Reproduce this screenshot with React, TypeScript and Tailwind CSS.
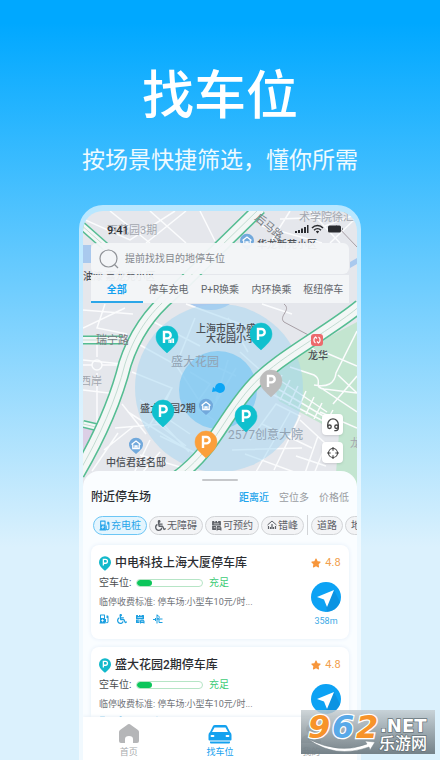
import type { ReactNode } from 'react'
import { FaStar, FaWheelchair } from 'react-icons/fa'
import clsx from 'clsx'

interface Lot {
  name: string
  rating: string
  free: number
  state: string
  fee: string
  distance: string
}

const tabs = ['全部', '停车充电', 'P+R换乘', '内环换乘', '枢纽停车']

const sorts = ['距离近', '空位多', '价格低']

const lots: Lot[] = [
  { name: '中电科技上海大厦停车库', rating: '4.8', free: 23, state: '充足', fee: '停车场:小型车10元/时...', distance: '358m' },
  { name: '盛大花园2期停车库', rating: '4.8', free: 23, state: '充足', fee: '停车场:小型车10元/时...', distance: '358m' },
]

const teal = '#0fc0ce'

const pins = [
  { x: 167, y: 337, color: teal, small: true },
  { x: 261, y: 334, color: teal },
  { x: 271, y: 381, color: '#bcbcbc' },
  { x: 163, y: 411, color: teal },
  { x: 246, y: 416, color: teal },
  { x: 206, y: 442, color: '#fb9f3b' },
]

function ChargeIcon({ className }: { className?: string }) {
  return (
    <svg viewBox="0 0 20 20" className={className} fill="currentColor" aria-hidden="true">
      <path fillRule="evenodd" d="M3 1h8a1 1 0 0 1 1 1v15h1v2H1v-2h1V2a1 1 0 0 1 1-1zm1 2v5h6V3zm4 6-4 5h2.500L6 17l4-5H7.500z" />
      <path d="M12 10h2v6q1.500 1.500 3 0V8h-2V3h3l1 2v11q-2 4-6 1.500l-1-1.500z" />
    </svg>
  )
}

function ReserveIcon({ className }: { className?: string }) {
  return (
    <svg viewBox="0 0 20 20" className={className} fill="currentColor" aria-hidden="true">
      <path d="M3 2h3v2h2V2h3v2h2V2h4a1 1 0 0 1 1 1v7H2V3a1 1 0 0 1 1-1z" />
      <path d="M2 11h7v7H3a1 1 0 0 1-1-1z" />
      <path d="M11 11h6l2 3v5h-2v-1h-5v1h-2v-5z" />
      <path d="M5 7h10M5 14h3M12 14.500h5" stroke="white" strokeWidth="1.200" />
    </svg>
  )
}

function PeakIcon({ className }: { className?: string }) {
  return (
    <svg viewBox="0 0 20 20" className={className} fill="none" stroke="currentColor" strokeWidth="2" aria-hidden="true">
      <path d="M1 10 10 2l9 8" />
      <path d="M3 18v-6M7 18v-4M10 18V8M13 18v-4M17 18v-6" strokeWidth="2.400" />
    </svg>
  )
}

function BarrierIcon({ className }: { className?: string }) {
  return (
    <svg viewBox="0 0 20 20" className={className} fill="none" stroke="currentColor" strokeWidth="2" aria-hidden="true">
      <path d="M0 11h6M8 1v18M5 8v6M8 3c6 0 6 7 0 7M8 10h11M12 10v7h7" />
    </svg>
  )
}

function PinIcon({ className }: { className?: string }) {
  return (
    <svg viewBox="-11 -11 22 27" className={className} aria-hidden="true">
      <path d="M0 16C-5 11-11 7-11 0a11 11 0 0 1 22 0C11 7 5 11 0 16z" fill="#12b9cb" />
      <path d="M-3 6v-11h4a3.500 3.500 0 0 1 0 7h-4" fill="none" stroke="white" strokeWidth="2.400" />
    </svg>
  )
}

function HousePin({ x, y }: { x: number; y: number }) {
  return (
    <g transform={`translate(${x} ${y})`}>
      <path d="M0 9-4 5.500A7 7 0 1 1 4 5.500z" fill="#72a9dc" />
      <path d="M-4.500-.5 0-4 4.500-.5M-3.200-.5v4h6.400v-4M-1 3.500V1h2v2.500" fill="none" stroke="white" strokeWidth="1.300" />
    </g>
  )
}

function Road({ d, width }: { d: string; width: number }) {
  return (
    <g fill="none">
      <path d={d} stroke="#55bd92" strokeWidth={width} />
      <path d={d} stroke="#f3f7f6" strokeWidth={width - 3} />
      <path d={d} stroke="#c3dcd2" strokeWidth="1" />
    </g>
  )
}

function CityMap() {
  return (
    <svg viewBox="83 211 274 276" preserveAspectRatio="xMidYMin slice" className="absolute inset-0 h-full w-full" aria-hidden="true">
      <rect x="-200" y="211" width="840" height="276" fill="#e5e7ec" />
      <path d="M83 245h8v18h-8zM350 262l7-4v6l-7 4zM190 304h40q-18 12-40 0z" fill="#a9c9ee" />
      <path d="M83 427h14l-14 34z" fill="#dccfe6" />
      <path d="M272 372 315 344 357 322V487h-24l20-44-68-52-20-8z" fill="#c3e5d0" />
      <path d="M270 385 352 432 357 487H290z" fill="#e5e7ec" />
      <path d="M270 373 325 412l32 19v56h-22l4-54-60-32z" fill="#c3e5d0" />

      {/* side streets */}
      <g fill="none" stroke="#fbfcfd" strokeWidth="1.500">
        <path d="M83 219 130 240 175 211M110 211l40 32M150 211l36 32M186 211l-40 32M200 211l15 30M290 211l-20 32M262 226l60 17M310 211l30 32M325 226l32-12M330 243l27-26M280 219l50-2" />
        <path d="M83 310l50 4M83 328l42-20M105 304l-8 24 30 6M83 360l39 4M83 390l34 4M97 345v12m0 16v60M83 365h9m10 0h17" />
        <circle cx="97" cy="365" r="5" />
        <path d="M140 345l36 20 22 34M150 320l50 26M132 372l40 16-24 40M140 400l50 34M128 412l60 38M170 392l-14 30 30 24M122 404l24 30M195 318l-17 42M228 318l20 34M186 304l60 22M115 428l48-4 26 28M104 450l30-24M92 471l26-38M150 440l-16 33M160 452l-18 21M140 455l40 12M160 436l42 20" />
        <path d="M190 372l20 12-14 20M202 360l34 16M228 360l-12 40M236 368l-26 44M184 400l30 20M240 352l20 18M292 314l-30-10M302 340l20 16" />
        <path d="M250 440 276 404l24 12-26 54M262 424l50 24M245 454l60 22M290 412l-34 60M232 450l70-2M300 420l26 24-16 40M318 436l-14 40M326 466l-30-10" />
        <path d="M278 379 327 412M273 386l52 31M270 393l55 29M282 375l-10 19M290 380l-10 20M298 386l-9 19M306 391l-8 18M314 397l-8 17M322 403l-8 16M333 410l-9 16M320 412l37 16" />
        <path d="M290 367l24 8c10 6-2 12 10 14l33 4M314 385q20 4 22-12l21-42M338 375l19 18M324 352l33 14M318 386l39 26M357 376l-24 28" />
      </g>
      <path d="M284 304c8 6-6 12 0 18l30 16M336 225l21 22" fill="none" stroke="#a79fa5" strokeWidth="1" />

      <circle cx="219" cy="388" r="84" fill="#a3d5f2" fillOpacity=".5" />
      <circle cx="218" cy="390" r="39" fill="#74c4f3" fillOpacity=".65" />

      <Road d="M83 340h40" width={9} />
      <Road d="M83 424 100 428" width={8} />
      <Road d="M80 224 106 247" width={9} />
      <Road d="M260 208 172 294C148 314 134 336 125 364 116 400 100 436 78 474" width={14} />
      <Road d="M176 478C214 450 222 420 250 388 276 358 326 334 360 306" width={14} />

      <g fontSize="10" fill="#4b4f55" fontWeight="500">
        <text x="83" y="280">油漆 嘉龙苑小区</text>
        <text x="257" y="248">华龙新苑小区</text>
        <text x="196" y="332">上海市民办盛</text>
        <text x="206" y="342">大花园小学</text>
        <text x="140" y="412">盛大花园2期</text>
        <text x="106" y="466">中信君廷名邸</text>
        <text x="308" y="359">龙华</text>
      </g>
      <g fontSize="11" fill="#777b82">
        <text x="96" y="344">瑞宁路</text>
        <text x="254" y="219" transform="rotate(40 254 219)">后马路</text>
      </g>
      <g fontSize="11" fill="#a3a7af">
        <text x="107" y="234">百花园3期</text>
        <text x="299" y="221">术学院徐汇</text>
        <text x="80" y="385">西岸</text>
        <text x="350" y="447">龙</text>
      </g>
      <g fontSize="12" fill="#92a3b3">
        <text x="171" y="366">盛大花园</text>
        <text x="228" y="439">2577创意大院</text>
      </g>

      <HousePin x={247} y={241} />
      <HousePin x={206} y={406} />
      <HousePin x={136} y={445} />
      <rect x="311" y="334" width="12" height="12" rx="3" fill="#ec6a6c" />
      <path d="M315.500 343a3.600 3.600 0 0 1 0-6l1.500 1.500M318.500 337a3.600 3.600 0 0 1 0 6l-1.500-1.500" fill="none" stroke="white" strokeWidth="1.200" />

      <path d="M212 392l1-5 5 4z" fill="#0ba5f5" />
      <circle cx="220" cy="388" r="5" fill="#0ba5f5" />

      {pins.map((pin) => (
        <g key={`${pin.x}-${pin.y}`} transform={`translate(${pin.x} ${pin.y})`}>
          <path d="M0 16C-5 11-11 7-11 0a11 11 0 0 1 22 0C11 7 5 11 0 16z" fill={pin.color} stroke={pin.color} strokeOpacity=".5" />
          <path d="M-3 6V-5H.5a3.200 3.200 0 0 1 0 6.400H-3" fill="none" stroke="white" strokeWidth="2.400" />
          {pin.small && <path d="M2 6V3h1.500v3M5 6V2h1.500v4" stroke="white" strokeWidth="1.200" fill="none" />}
        </g>
      ))}
    </svg>
  )
}

function StatusBar() {
  return (
    <div className="flex h-8 items-center justify-between pt-1 pr-1 pl-4 text-[#2a2c30]">
      <span className="pt-1 text-[11px] leading-4 font-medium">9:41</span>
      <svg viewBox="0 0 50 12" className="h-3 w-[50px]" fill="currentColor" aria-hidden="true">
        <path d="M0 8h2v2H0zM3 7h2v3H3zM6 5.500h2V10H6zM9 4h2v6H9zM12 2h1.500v8H12z" />
        <path d="M17 5c3-3.500 8-3.500 11 0M19 7.200c2-2 5-2 7 0" fill="none" stroke="currentColor" strokeWidth="1.500" />
        <path d="M22.500 10.500 20.800 8.500q1.700-1.300 3.400 0z" />
        <rect x="33" y="2.500" width="13" height="7" rx="1.500" />
        <path d="M47 4.500q1.500 1.500 0 3z" />
      </svg>
    </div>
  )
}

function MapButton({ label, children }: { label: string; children: ReactNode }) {
  return (
    <button aria-label={label} className="flex size-[21px] items-center justify-center rounded-sm bg-white text-[#444] shadow-sm">
      {children}
    </button>
  )
}

function Chip({ icon, text, active }: { icon?: ReactNode; text: string; active?: boolean }) {
  return (
    <button
      className={clsx(
        'flex h-[19px] shrink-0 items-center gap-px rounded-full border px-[5px] text-[10px]',
        active ? 'border-[#6cc6f5] bg-[#e4f5fe] text-[#2aa6ea]' : 'border-[#d2d4d7] bg-[#f3f4f6] text-[#5d6066]',
      )}
    >
      {icon}
      {text}
    </button>
  )
}

function LotCard({ lot }: { lot: Lot }) {
  return (
    <article className="flex h-[94px] shrink-0 justify-between rounded-lg bg-white px-2 pt-2.5 shadow-[0_0_4px_#e3edf8]">
      <div className="min-w-0 whitespace-nowrap">
        <h3 className="flex items-center gap-1 text-xs font-medium text-[#2b2d31]">
          <PinIcon className="h-[15px] w-3" />
          {lot.name}
        </h3>
        <div className="mt-1 flex items-center text-[10px] leading-4 text-[#4a4c50]">
          <span className="w-[37px]">空车位:</span>
          <span className="h-2 w-[67px] overflow-hidden rounded-full border border-[#b6e5c6]">
            <span className="block h-full rounded-full bg-[#0cc65b]" style={{ width: `${lot.free}%` }} />
          </span>
          <span className="ml-1.5 text-[#3ecb77]">{lot.state}</span>
        </div>
        <p className="mt-[3px] text-[9px] leading-4 text-[#707378]">临停收费标准: {lot.fee}</p>
        <div className="mt-1 flex items-center gap-2 text-[#1c9fe0]">
          <ChargeIcon className="size-2.5" />
          <FaWheelchair className="size-2.5" />
          <ReserveIcon className="size-2.5" />
          <BarrierIcon className="size-2.5" />
        </div>
      </div>
      <div className="flex flex-col items-center">
        <span className="flex items-center gap-1 text-[11px] leading-4 text-[#f2a04e]">
          <FaStar className="size-2.5 text-[#f7963b]" />
          {lot.rating}
        </span>
        <button aria-label="导航" className="mt-[11px] rounded-full">
          <svg viewBox="0 0 30 30" className="size-[30px]">
            <circle cx="15" cy="15" r="15" fill="#0ca2f4" />
            <path d="M23 8 29 20A15 15 0 0 1 16 30L15 24z" fill="#0b89d6" fillOpacity=".6" />
            <path d="M23 8 6 15l7 2.500L16 25z" fill="white" />
          </svg>
        </button>
        <span className="mt-[3px] text-[9px] leading-3 text-[#3ba9e6]">{lot.distance}</span>
      </div>
    </article>
  )
}

function NavItem({ label, active, children }: { label: string; active?: boolean; children: ReactNode }) {
  return (
    <button className={clsx('flex flex-1 flex-col items-center pt-1.5 text-[9px] leading-3', active ? 'text-[#14a1ef]' : 'text-[#a9abae]')}>
      {children}
      <span className="mt-px">{label}</span>
    </button>
  )
}

function Watermark() {
  return (
    <div className="absolute right-[5px] bottom-1.5 h-11 w-[134px] bg-linear-to-b from-[#c3cbcf]/80 to-[#6f7c83]/95">
      <svg viewBox="0 0 134 44" className="h-full w-full font-['DejaVu_Sans','Noto_Sans_CJK_SC',sans-serif]">
        <path d="M7 29q32 16 59 5l-2-3 10 1-5 8-1-3Q34 49 7 29z" fill="white" stroke="#7b878d" strokeWidth=".5" />
        <g fontSize="32" fontWeight="700" fontStyle="italic" stroke="white" strokeWidth="2.500" paintOrder="stroke">
          <text x="7" y="28" fill="#f7932a">9</text>
          <text x="31" y="28" fill="#58a9e8">6</text>
          <text x="55" y="28" fill="#f7932a">2</text>
        </g>
        <g fill="white" stroke="#68747a" strokeWidth="1.500" paintOrder="stroke">
          <text x="79" y="22" fontSize="18" fontWeight="700">.NET</text>
          <text x="78" y="39" fontSize="16" fontWeight="500" className="font-['Noto_Sans_CJK_SC',sans-serif]">乐游网</text>
        </g>
      </svg>
    </div>
  )
}

export default function App() {
  return (
    <main className="relative flex h-screen min-h-[600px] flex-col overflow-hidden bg-linear-to-b/srgb from-[#00a8ff] from-3% to-[#dbf1fd] to-72% font-[Roboto,'Noto_Sans_CJK_SC',sans-serif]">
      <header className="pt-[69px] text-center whitespace-nowrap text-white">
        <h1 className="text-[52px] leading-[56px] font-medium">找车位</h1>
        <p className="mt-5 text-[23px] leading-8 text-[#effaff]">按场景快捷筛选，懂你所需</p>
      </header>

      <div className="mx-[79px] mt-7 flex min-h-0 flex-1 flex-col rounded-t-3xl bg-white/60 px-1 pt-1.5">
        <div className="relative flex min-h-0 flex-1 flex-col overflow-hidden rounded-t-[20px]">
          <section className="relative h-[276px] shrink-0 px-2">
            <CityMap />
            <div className="relative">
              <StatusBar />
              <label className="flex h-[31px] items-center gap-1.5 rounded-md bg-[#f3f5f8]/95 px-2">
                <svg viewBox="0 0 20 20" className="size-5 shrink-0" fill="none" stroke="#8f9297" strokeWidth="1.200" aria-hidden="true">
                  <circle cx="9.500" cy="9.500" r="8.500" />
                  <path d="M15.500 15.500 19 19" />
                </svg>
                <span className="sr-only">搜索</span>
                <input placeholder="提前找找目的地停车位" className="w-full min-w-0 bg-transparent text-[10px] outline-none placeholder:text-[#85888e]" />
              </label>
              <nav className="mt-px flex h-7 bg-[#f3f5f8]/95 text-[10px] whitespace-nowrap text-[#62656b]">
                {tabs.map((tab, i) => (
                  <button key={tab} className={clsx('flex-1 basis-0 border-b-2 pt-0.5', i === 0 ? 'border-[#2ba6e8] font-bold text-[#14a1ef]' : 'border-transparent')}>
                    {tab}
                  </button>
                ))}
              </nav>
            </div>
            <div className="absolute right-3.5 bottom-6 flex flex-col gap-[7px]">
              <MapButton label="客服">
                <svg viewBox="0 0 16 16" className="size-3.5" fill="none" stroke="currentColor" strokeWidth="1.500">
                  <path d="M2 10V7a6 6 0 0 1 12 0v5q0 2.500-4.500 2.500" />
                  <circle cx="4" cy="10" r="2" />
                  <circle cx="12" cy="10" r="2" />
                </svg>
              </MapButton>
              <MapButton label="定位">
                <svg viewBox="0 0 16 16" className="size-3" fill="none" stroke="currentColor" strokeWidth="1.500">
                  <circle cx="8" cy="8" r="6" />
                  <path d="M8 0v5M8 11v5M0 8h5M11 8h5" />
                </svg>
              </MapButton>
            </div>
          </section>

          <section className="relative -mt-4 flex min-h-0 flex-1 flex-col overflow-hidden rounded-t-2xl bg-[#fafdff] pl-2">
            <div className="mt-2 mr-2 h-0.5 w-9 shrink-0 self-center rounded-full bg-[#c6c8cb]" />
            <div className="mt-1.5 mr-2 flex h-5 shrink-0 items-center justify-between">
              <h2 className="text-xs font-medium text-[#2b2d31]">附近停车场</h2>
              <div className="flex gap-2.5 text-[10px] text-[#999ca1]">
                {sorts.map((sort, i) => (
                  <button key={sort} className={clsx(i === 0 && 'font-medium text-[#22a4ec]')}>{sort}</button>
                ))}
              </div>
            </div>
            <div className="mt-2 flex shrink-0 items-center gap-0.5 overflow-hidden pl-0.5">
              <Chip active icon={<ChargeIcon className="size-[11px]" />} text="充电桩" />
              <Chip icon={<FaWheelchair className="size-[11px]" />} text="无障碍" />
              <Chip icon={<ReserveIcon className="size-[11px]" />} text="可预约" />
              <Chip icon={<PeakIcon className="size-2.5" />} text="错峰" />
              <span className="mx-px h-5 w-px shrink-0 bg-[#d2d4d7]" />
              <Chip text="道路" />
              <Chip text="地库" />
            </div>
            <div className="mt-2.5 mr-2 flex min-h-0 flex-1 flex-col gap-2">
              {lots.map((lot) => (
                <LotCard key={lot.name} lot={lot} />
              ))}
            </div>
          </section>

          <nav className="relative flex h-[43px] shrink-0 bg-white shadow-[0_-1px_3px_#eaf1f7]">
            <NavItem label="首页">
              <svg viewBox="0 0 22 22" className="size-[22px]" fill="#b5b6b8">
                <path d="M11 1q1 0 2 1l7 5q1 1 1 2v9q0 2-2 2h-4v-4q0-3-4-3t-4 3v4H3q-2 0-2-2V9q0-1 1-2l7-5q1-1 2-1z" />
              </svg>
            </NavItem>
            <NavItem label="找车位" active>
              <svg viewBox="0 0 26 22" className="h-[22px] w-[26px]" fill="#14a1ef">
                <path d="M6 3q.5-1 2-1h10q1.500 0 2 1l3 6q1.500 1 1.500 3v4.500q0 1-1 1h-21q-1 0-1-1V12q0-2 1.500-3z" />
                <path d="M3 18.500h20v1q0 1-1 1H4q-1 0-1-1z" />
                <path d="M7.500 4.500h11L21 9H5z" fill="white" />
                <path d="M4.500 13h2M19.500 13h2" stroke="white" strokeWidth="1.800" strokeLinecap="round" />
              </svg>
            </NavItem>
            <NavItem label="我的">
              <svg viewBox="0 0 22 22" className="size-[22px]" fill="#b5b6b8">
                <circle cx="11" cy="6" r="5" />
                <path d="M1 20q0-8 7-8h6q7 0 7 8z" />
              </svg>
            </NavItem>
          </nav>
        </div>
      </div>
      <Watermark />
    </main>
  )
}
